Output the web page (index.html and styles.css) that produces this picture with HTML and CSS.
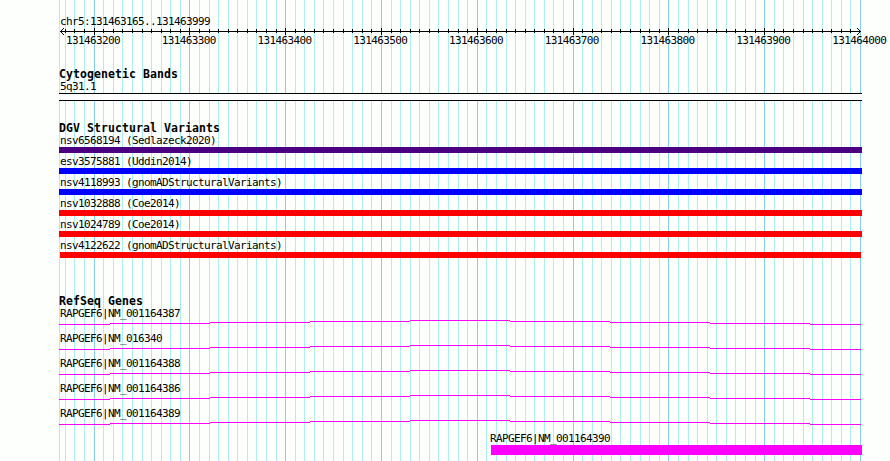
FILE: index.html
```
<!DOCTYPE html>
<html lang="en">
<head>
    <meta charset="UTF-8">
    <meta name="viewport" content="width=device-width, initial-scale=1.0">
    <title>chr5:131463165..131463999</title>
    <link rel="stylesheet" href="styles.css">
</head>
<body>
    <div class="browser">
        <svg class="grid" id="grid" width="890" height="461"></svg>

        <header class="ruler">
            <div class="label">chr5:131463165..131463999</div>
            <svg class="axis" id="axis" width="890" height="9"></svg>
            <div class="positions">
                <span>131463200</span>
                <span>131463300</span>
                <span>131463400</span>
                <span>131463500</span>
                <span>131463600</span>
                <span>131463700</span>
                <span>131463800</span>
                <span>131463900</span>
                <span>131464000</span>
            </div>
        </header>

        <section class="track cytoband">
            <h2>Cytogenetic Bands</h2>
            <div class="label">5q31.1</div>
            <div class="band"></div>
        </section>

        <section class="track variants">
            <h2>DGV Structural Variants</h2>
            <div class="variant">
                <div class="label">nsv6568194 (Sedlazeck2020)</div>
                <div class="bar complex"></div>
            </div>
            <div class="variant">
                <div class="label">esv3575881 (Uddin2014)</div>
                <div class="bar gain"></div>
            </div>
            <div class="variant">
                <div class="label">nsv4118993 (gnomADStructuralVariants)</div>
                <div class="bar gain"></div>
            </div>
            <div class="variant">
                <div class="label">nsv1032888 (Coe2014)</div>
                <div class="bar loss"></div>
            </div>
            <div class="variant">
                <div class="label">nsv1024789 (Coe2014)</div>
                <div class="bar loss"></div>
            </div>
            <div class="variant">
                <div class="label">nsv4122622 (gnomADStructuralVariants)</div>
                <div class="bar loss short"></div>
            </div>
        </section>

        <section class="track genes">
            <h2>RefSeq Genes</h2>
            <div class="gene"><div class="label">RAPGEF6|NM_001164387</div></div>
            <div class="gene"><div class="label">RAPGEF6|NM_016340</div></div>
            <div class="gene"><div class="label">RAPGEF6|NM_001164388</div></div>
            <div class="gene"><div class="label">RAPGEF6|NM_001164386</div></div>
            <div class="gene"><div class="label">RAPGEF6|NM_001164389</div></div>
            <div class="gene exon">
                <div class="label">RAPGEF6|NM_001164390</div>
                <div class="bar"></div>
            </div>
        </section>
    </div>

    <script src="script.js"></script>
</body>
</html>
```
FILE: styles.css
```
* {
    margin: 0;
    padding: 0;
    box-sizing: border-box;
}

body {
    background: #fdfffd;
    color: #000000;
    font-family: 'DejaVu Sans Mono', monospace;
    overflow: hidden;
}

.browser {
    position: relative;
    width: 890px;
    height: 461px;
    padding-top: 15px;
    overflow: hidden;
}

svg {
    display: block;
    shape-rendering: crispEdges;
}

.grid {
    position: absolute;
    top: 0;
    left: 0;
    z-index: -1;
}

.minor {
    stroke: #afeeee;
}

.major {
    stroke: #87ceeb;
}

.label,
.positions {
    height: 12px;
    font-size: 11px;
    line-height: 14px;
    letter-spacing: -0.622px;
    white-space: pre;
}

.label {
    padding-left: 1px;
}

h2 {
    height: 12px;
    font-size: 11.5px;
    line-height: 12px;
    letter-spacing: 0.077px;
}

/* ruler */
.ruler .label {
    padding-left: 60px;
}

.axis path {
    stroke: #000000;
    fill: none;
}

.positions {
    display: flex;
    gap: 41.75px;
    margin-top: -2px;
    padding-left: 66px;
}

.positions span {
    flex: 0 0 54px;
}

/* tracks */
.track {
    width: 803px;
    margin-left: 59px;
}

.cytoband {
    margin-top: 22px;
}

.band {
    height: 8px;
    margin-top: 1px;
    background: #ffffff;
    border-top: 1px solid #000000;
    border-bottom: 1px solid #000000;
}

.variants {
    margin-top: 21px;
}

.variant {
    height: 21px;
}

.variant .bar {
    height: 6px;
    margin-top: 1px;
}

.complex {
    background: #4b0082;
}

.gain {
    background: #0000ff;
}

.loss {
    background: #ff0000;
}

.short {
    margin-left: 1px;
    margin-right: 1px;
}

.genes {
    margin-top: 35px;
}

.gene {
    height: 25px;
}

.intron {
    margin-top: 1px;
}

.intron path {
    stroke: #ff00ff;
}

.exon {
    padding-left: 430px;
}

.exon .bar {
    height: 10px;
    margin-top: 1px;
    margin-left: 2px;
    background: #ff00ff;
}
```
FILE: script.js
```
const svgNS = 'http://www.w3.org/2000/svg';

// pixel columns of the 10 bp grid
const columns = [
    59, 65, 74, 84, 94, 103, 113, 122, 132, 142, 151, 161, 170, 180,
    189, 199, 209, 218, 228, 237, 247, 256, 266, 276,
    285, 295, 304, 314, 323, 333, 343, 352, 362, 371,
    381, 391, 400, 410, 419, 429, 438, 448, 458, 467,
    477, 486, 496, 506, 515, 525, 534, 544, 553, 563,
    573, 582, 592, 601, 611, 620, 630, 640, 649, 659,
    668, 678, 688, 697, 707, 716, 726, 735, 745, 755,
    764, 774, 783, 793, 803, 812, 822, 831, 841, 850,
    860
];

function isMajor(i) {
    return i >= 4 && (i - 4) % 10 === 0;
}

function addPath(svg, d, className) {
    const path = document.createElementNS(svgNS, 'path');
    path.setAttribute('d', d);
    if (className) path.setAttribute('class', className);
    svg.appendChild(path);
}

const grid = document.getElementById('grid');
const axis = document.getElementById('axis');

columns.forEach((x, i) => {
    addPath(grid, `M${x + 0.5} 0V461`, isMajor(i) ? 'major' : 'minor');

    // the outermost columns are covered by the arrow heads
    if (i > 0 && i < columns.length - 1) {
        addPath(axis, isMajor(i) ? `M${x + 0.5} 1V8` : `M${x + 0.5} 2V6`);
    }
});
addPath(axis, 'M60 4.5H861');
addPath(axis, 'M60 4.5h1M61 3.5h1M62 2.5h1M63 1.5h1M61 5.5h1M62 6.5h1M63 7.5h1');
addPath(axis, 'M860 4.5h1M859 3.5h1M858 2.5h1M857 1.5h1M859 5.5h1M858 6.5h1M857 7.5h1');

// introns are drawn as a shallow arc, one pixel step every 100px
const arc = 'M0 4.5h51M51 3.5h100M151 2.5h100M251 1.5h100M351 .5h100M451 1.5h100M551 2.5h100M651 3.5h100M751 4.5h51';

document.querySelectorAll('.gene:not(.exon)').forEach(gene => {
    const svg = document.createElementNS(svgNS, 'svg');
    svg.setAttribute('class', 'intron');
    svg.setAttribute('width', 803);
    svg.setAttribute('height', 5);
    addPath(svg, arc);
    gene.appendChild(svg);
});
```
